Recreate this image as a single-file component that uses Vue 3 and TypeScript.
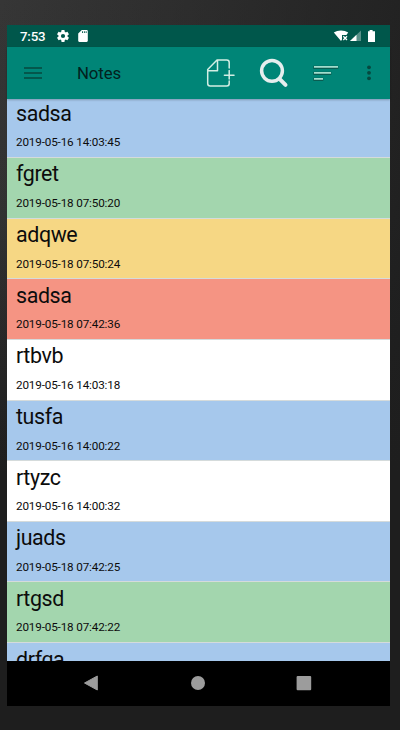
<script setup lang="ts">
interface Note {
  title: string
  date: string
  color: 'blue' | 'green' | 'yellow' | 'red' | 'white'
}

const notes: Note[] = [
  { title: 'sadsa', date: '2019-05-16 14:03:45', color: 'blue' },
  { title: 'fgret', date: '2019-05-18 07:50:20', color: 'green' },
  { title: 'adqwe', date: '2019-05-18 07:50:24', color: 'yellow' },
  { title: 'sadsa', date: '2019-05-18 07:42:36', color: 'red' },
  { title: 'rtbvb', date: '2019-05-16 14:03:18', color: 'white' },
  { title: 'tusfa', date: '2019-05-16 14:00:22', color: 'blue' },
  { title: 'rtyzc', date: '2019-05-16 14:00:32', color: 'white' },
  { title: 'juads', date: '2019-05-18 07:42:25', color: 'blue' },
  { title: 'rtgsd', date: '2019-05-18 07:42:22', color: 'green' },
  { title: 'drfga', date: '', color: 'blue' },
]
</script>

<template>
  <div class="desk">
    <div class="phone">
      <div class="status">
        <span class="clock">7:53</span>
        <svg class="gear" viewBox="2 2 20 20" width="12" height="12">
          <path fill="#fff" fill-rule="evenodd" d="M19.43 12.98c.04-.32.07-.64.07-.98s-.03-.66-.07-.98l2.11-1.65c.19-.15.24-.42.12-.64l-2-3.46c-.12-.22-.39-.3-.61-.22l-2.49 1c-.52-.4-1.08-.73-1.69-.98l-.38-2.65A.49.49 0 0 0 14 2h-4c-.25 0-.46.18-.49.42l-.38 2.65c-.61.25-1.17.59-1.69.98l-2.49-1c-.23-.09-.49 0-.61.22l-2 3.46c-.13.22-.07.49.12.64l2.11 1.65c-.04.32-.07.65-.07.98s.03.66.07.98l-2.11 1.65c-.19.15-.24.42-.12.64l2 3.46c.12.22.39.3.61.22l2.49-1c.52.4 1.08.73 1.69.98l.38 2.65c.03.24.24.42.49.42h4c.25 0 .46-.18.49-.42l.38-2.65c.61-.25 1.17-.59 1.69-.98l2.49 1c.23.09.49 0 .61-.22l2-3.46c.12-.22.07-.49-.12-.64l-2.11-1.65zM12 15.5a3.5 3.5 0 1 1 0-7 3.5 3.5 0 0 1 0 7z" />
        </svg>
        <svg class="sd" viewBox="4 2 16 20" width="10" height="12">
          <path fill="#fff" d="M18 2h-8L4.02 8 4 20c0 1.1.9 2 2 2h12c1.1 0 2-.9 2-2V4c0-1.1-.9-2-2-2zm-6 5h-1.500V4H12v3zm3 0h-1.500V4H15v3zm3 0h-1.500V4H18v3z" />
        </svg>
        <svg class="radio" viewBox="0 0 44 14" width="44" height="14">
          <path fill="#fff" d="M.8 3.600C4.800.800 11.200.800 15.200 3.600L13.400 6H9v4.400L8 12z" />
          <path fill="none" stroke="#fff" stroke-width="1.3" d="M10.300 7.300l3.700 3.700M14 7.300L10.300 11" />
          <path fill="#fff" fill-opacity=".35" d="M28 1.500V12H17z" />
          <path fill="#fff" d="M23.500 5.800V12H17z" />
          <path fill="#fff" d="M35 2.200h1.600V1h3v1.200H42V13H35z" />
        </svg>
      </div>

      <header class="bar">
        <svg class="burger" viewBox="0 0 18 12" width="18" height="12">
          <path stroke="#06483f" stroke-width="1.5" d="M0 1h18M0 6h18M0 11h18" />
        </svg>
        <h1 class="heading">Notes</h1>
        <svg class="add" viewBox="0 0 30 30" width="30" height="30">
          <path fill="none" stroke="#d3eee4" stroke-width="1.5" stroke-linejoin="round" stroke-linecap="round" d="M24.200 10V4.500Q24.200 2 21.700 2H12L2.700 11.500V25.500Q2.700 28 5.200 28H21.700Q24.200 28 24.200 25.500V23M12.500 2.500V12.700H3.200M24.200 12.500V21M19.400 17.200H29" />
        </svg>
        <svg class="find" viewBox="0 0 30 30" width="30" height="30">
          <circle cx="13" cy="12.800" r="10.400" fill="none" stroke="#e6eeee" stroke-width="3.500" />
          <path stroke="#e6eeee" stroke-width="4" stroke-linecap="round" d="M20.500 20.800l6 6" />
        </svg>
        <svg class="sort" viewBox="0 0 26 18" width="26" height="18">
          <path stroke="#0a5c51" stroke-width="3.200" d="M.3 3.300h25M.3 9.300h18M.3 15.300h10" />
          <path stroke="#a3dccd" stroke-width="1.800" d="M1 2.900h24M1 8.900h17M1 14.900h9" />
        </svg>
        <svg class="more" viewBox="0 0 6 16" width="6" height="16">
          <g fill="#06483f">
            <circle cx="3" cy="2.300" r="1.900" />
            <circle cx="3" cy="7.800" r="1.900" />
            <circle cx="3" cy="13.300" r="1.900" />
          </g>
        </svg>
      </header>

      <main class="list">
        <article v-for="(note, i) in notes" :key="i" class="note" :class="note.color">
          <h2 class="title">{{ note.title }}</h2>
          <p class="date">{{ note.date }}</p>
        </article>
      </main>

      <nav class="nav">
        <svg viewBox="0 0 16 16" width="16" height="16"><path fill="#9c9c9c" stroke="#9c9c9c" stroke-linejoin="round" d="M14.300 1v14L1.500 8z" /></svg>
        <svg viewBox="0 0 16 16" width="16" height="16"><circle cx="8" cy="8" r="7" fill="#9c9c9c" /></svg>
        <svg viewBox="0 0 16 16" width="16" height="16"><rect x=".6" y=".9" width="14.600" height="14.400" rx="1" fill="#9c9c9c" /></svg>
      </nav>
    </div>
  </div>
</template>

<style>
body {
  background: #1e1e1e;
}
</style>

<style scoped>
.desk {
  box-sizing: border-box;
  height: 730px;
  padding: 25px 10px 24px 7px;
  overflow: hidden;
  background: linear-gradient(100deg, rgba(30, 30, 30, 0) 0, #1e1e1e 95%), linear-gradient(180deg, #363636 0, #333 30%, #1e1e1e 65%);
  font-family: Roboto, sans-serif;
}
.phone {
  display: flex;
  flex-direction: column;
  height: 681px;
}
.status {
  display: flex;
  align-items: center;
  height: 22px;
  padding: 0 13px;
  background: #00574b;
  color: #fff;
}
.clock {
  width: 37px;
  padding-top: 1px;
  font-size: 13.300px;
  font-weight: 500;
  letter-spacing: -0.2px;
  line-height: 22px;
}
.sd {
  margin-left: 9px;
}
.radio {
  margin: 0 0 1px auto;
}
.bar {
  display: flex;
  align-items: center;
  height: 52px;
  padding-left: 17px;
  background: #008577;
  box-shadow: 0 1px 2px rgba(0, 0, 0, 0.25);
  z-index: 1;
}
.heading {
  width: 128px;
  margin: 0 0 0 35px;
  font-size: 16.800px;
  font-weight: 400;
  letter-spacing: -0.1px;
  color: #03211d;
}
.find {
  margin-left: 24px;
}
.sort {
  margin-left: 24px;
}
.more {
  margin-left: 27px;
}
.list {
  height: 562px;
  overflow: hidden;
}
.note {
  box-sizing: border-box;
  height: 60.65px;
  padding: 1.500px 9px 0;
  border-bottom: 1px solid #d5dbdb;
  color: #0c0c0c;
}
.note:first-child {
  margin-top: -1.700px;
}
.title {
  margin: 0;
  font-size: 21.400px;
  font-weight: 400;
  letter-spacing: -0.400px;
  line-height: 30px;
}
.date {
  margin: 6.500px 0 0;
  font-size: 11.700px;
  letter-spacing: -0.150px;
  line-height: 14px;
}
.blue {
  background: #a6c8ec;
}
.green {
  background: #a3d6ae;
}
.yellow {
  background: #f6d784;
}
.red {
  background: #f59483;
}
.white {
  background: #fff;
}
.nav {
  display: flex;
  justify-content: space-between;
  align-items: center;
  box-sizing: border-box;
  height: 45px;
  padding: 0 78px 1px 76px;
  background: #000;
}
</style>
